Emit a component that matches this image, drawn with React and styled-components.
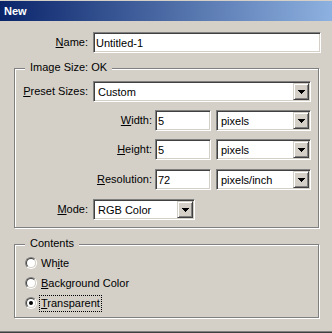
import React from "react";
import styled, { createGlobalStyle, css } from "styled-components";

const Global = createGlobalStyle`
  html, body { margin: 0; padding: 0; background: #d4d0c8; }
  body { font-family: "Liberation Sans", Arial, sans-serif; font-size: 11px; }
`;

const Window = styled.div`
  width: 332px;
  height: 333px;
  box-sizing: border-box;
  background: #d4d0c8;
  padding-top: 1px;
  border-bottom: 1px solid #404040;
  box-shadow: inset 0 -1px 0 #808080;
  overflow: hidden;
  font-family: "Liberation Sans", Arial, sans-serif;
  font-size: 11px;
  color: #000;
`;

const TitleBar = styled.div`
  height: 20px;
  display: flex;
  align-items: center;
  padding-left: 4px;
  background: linear-gradient(90deg, #0a246a 0%, #8db1e0 100%);
  color: #fff;
  font-weight: bold;
  font-size: 11px;
`;

const Body = styled.div`
  padding-top: 11px;
  display: flex;
  flex-direction: column;
`;

const Row = styled.div`
  display: flex;
  align-items: center;
  height: 21px;
  margin-top: ${(p) => p.$mt || 0}px;
`;

const Label = styled.label`
  flex: none;
  width: ${(p) => p.$w}px;
  margin-right: ${(p) => p.$gap}px;
  text-align: right;
  white-space: nowrap;
  line-height: 13px;
`;

const sunken = css`
  box-sizing: border-box;
  border: 1px solid;
  border-color: #808080 #fff #fff #808080;
  box-shadow: inset 1px 1px 0 #404040, inset -1px -1px 0 #d4d0c8;
  background: #fff;
  height: 21px;
`;

const TextBox = styled.input`
  ${sunken};
  flex: none;
  width: ${(p) => p.$w}px;
  margin: 0 ${(p) => p.$mr || 0}px 0 0;
  padding: 0 2px;
  font-family: "Liberation Sans", Arial, sans-serif;
  font-size: 11px;
  color: #000;
  outline: none;
`;

const Select = styled.div`
  ${sunken};
  flex: none;
  width: ${(p) => p.$w}px;
  padding: 1px;
  display: flex;
  align-items: stretch;
`;

const SelectText = styled.span`
  flex: 1;
  display: flex;
  align-items: center;
  padding-left: 3px;
  white-space: nowrap;
`;

const DropButton = styled.span`
  flex: none;
  width: 16px;
  box-sizing: border-box;
  border: 1px solid;
  border-color: #d4d0c8 #404040 #404040 #d4d0c8;
  box-shadow: inset 1px 1px 0 #fff, inset -1px -1px 0 #808080;
  background: #d4d0c8;
  display: flex;
  align-items: center;
  justify-content: center;
`;

const Group = styled.div`
  position: relative;
  box-sizing: border-box;
  width: 305px;
  margin-left: 14px;
  margin-top: ${(p) => p.$mt}px;
  padding: ${(p) => p.$pad};
  border: 1px solid #808080;
  box-shadow: inset 1px 1px 0 #fff, 1px 1px 0 #fff;
  display: flex;
  flex-direction: column;
`;

const Legend = styled.span`
  position: absolute;
  top: -8px;
  left: 10px;
  padding: 0 5px;
  background: #d4d0c8;
  line-height: 13px;
  white-space: nowrap;
`;

const RadioRow = styled.div`
  display: flex;
  align-items: center;
  height: 20px;
`;

const RadioOuter = styled.span`
  flex: none;
  width: 12px;
  height: 12px;
  box-sizing: border-box;
  border-radius: 50%;
  border: 1px solid;
  border-color: #808080 #fff #fff #808080;
  display: flex;
  align-items: center;
  justify-content: center;
  margin-right: 2px;
`;

const RadioInner = styled.span`
  width: 10px;
  height: 10px;
  box-sizing: border-box;
  border-radius: 50%;
  border: 1px solid;
  border-color: #404040 #d4d0c8 #d4d0c8 #404040;
  background: #fff;
  display: flex;
  align-items: center;
  justify-content: center;
`;

const Dot = styled.span`
  width: 4px;
  height: 4px;
  border-radius: 50%;
  background: #000;
`;

const RadioLabel = styled.span`
  line-height: 13px;
  padding: 1px;
  border: 1px dotted ${(p) => (p.$focus ? "#000" : "transparent")};
  white-space: nowrap;
`;

const Arrow = () => (
  <svg width="7" height="4" viewBox="0 0 7 4" shapeRendering="crispEdges">
    <path d="M0 0h7v1h-1v1h-1v1h-1v1h-1v-1h-1v-1h-1v-1h-1z" fill="#000" />
  </svg>
);

const Dropdown = ({ w, children }) => (
  <Select $w={w}>
    <SelectText>{children}</SelectText>
    <DropButton>
      <Arrow />
    </DropButton>
  </Select>
);

const Radio = ({ checked, focus, children }) => (
  <RadioRow>
    <RadioOuter>
      <RadioInner>{checked && <Dot />}</RadioInner>
    </RadioOuter>
    <RadioLabel $focus={focus}>{children}</RadioLabel>
  </RadioRow>
);

export default function App() {
  return (
    <>
      <Global />
      <Window>
        <TitleBar>New</TitleBar>
        <Body>
          <Row>
            <Label $w={88} $gap={5}>
              <u>N</u>ame:
            </Label>
            <TextBox $w={228} readOnly value="Untitled-1" />
          </Row>

          <Group $mt={15} $pad="12px 0 7px 0">
            <Legend>Image Size: OK</Legend>
            <Row>
              <Label $w={73} $gap={5}>
                <u>P</u>reset Sizes:
              </Label>
              <Dropdown w={218}>Custom</Dropdown>
            </Row>
            <Row $mt={8}>
              <Label $w={137} $gap={3}>
                <u>W</u>idth:
              </Label>
              <TextBox $w={56} $mr={5} readOnly value="5" />
              <Dropdown w={95}>pixels</Dropdown>
            </Row>
            <Row $mt={8}>
              <Label $w={137} $gap={3}>
                <u>H</u>eight:
              </Label>
              <TextBox $w={56} $mr={5} readOnly value="5" />
              <Dropdown w={95}>pixels</Dropdown>
            </Row>
            <Row $mt={9}>
              <Label $w={137} $gap={3}>
                <u>R</u>esolution:
              </Label>
              <TextBox $w={56} $mr={5} readOnly value="72" />
              <Dropdown w={95}>pixels/inch</Dropdown>
            </Row>
            <Row $mt={9}>
              <Label $w={73} $gap={5}>
                <u>M</u>ode:
              </Label>
              <Dropdown w={102}>RGB Color</Dropdown>
            </Row>
          </Group>

          <Group $mt={16} $pad="8px 0 4px 10px">
            <Legend>Contents</Legend>
            <Radio>
              Wh<u>i</u>te
            </Radio>
            <Radio>
              <u>B</u>ackground Color
            </Radio>
            <Radio checked focus>
              <u>T</u>ransparent
            </Radio>
          </Group>
        </Body>
      </Window>
    </>
  );
}
